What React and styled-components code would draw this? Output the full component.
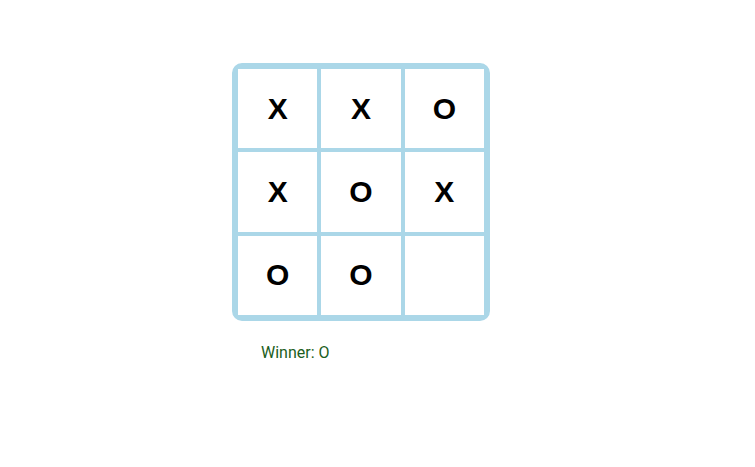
import React from "react";
import styled, { createGlobalStyle } from "styled-components";

const GlobalStyle = createGlobalStyle`
  body { margin: 0; background: #fff; }
`;

const Page = styled.main`
  display: flex;
  flex-direction: column;
  align-items: center;
  padding: 63px 33px 63px 0;
  font-family: Roboto, "Liberation Sans", sans-serif;
`;

const Game = styled.section`
  width: min(258px, 100%);
`;

const Board = styled.div`
  display: grid;
  grid-template-columns: repeat(3, 1fr);
  box-sizing: border-box;
  border: 4px solid #abd7e8;
  border-radius: 10px;
  background: #abd7e8;
`;

const Square = styled.button`
  box-sizing: border-box;
  aspect-ratio: 1;
  padding: 0;
  border: 2px solid #abd7e8;
  background: #fff;
  color: #000;
  font: 800 30px/30px "Liberation Sans", Arial, sans-serif;
  cursor: pointer;
`;

const Status = styled.p`
  margin: 20px 0 0 29px;
  color: #1b5e20;
  font-size: 16px;
  line-height: 24px;
`;

const squares = ["X", "X", "O", "X", "O", "X", "O", "O", ""];

export default function App() {
  return (
    <Page>
      <GlobalStyle />
      <Game>
        <Board>
          {squares.map((mark, i) => (
            <Square key={i} type="button" aria-label={`Square ${i + 1}${mark ? `: ${mark}` : ""}`}>
              {mark}
            </Square>
          ))}
        </Board>
        <Status>Winner: O</Status>
      </Game>
    </Page>
  );
}
